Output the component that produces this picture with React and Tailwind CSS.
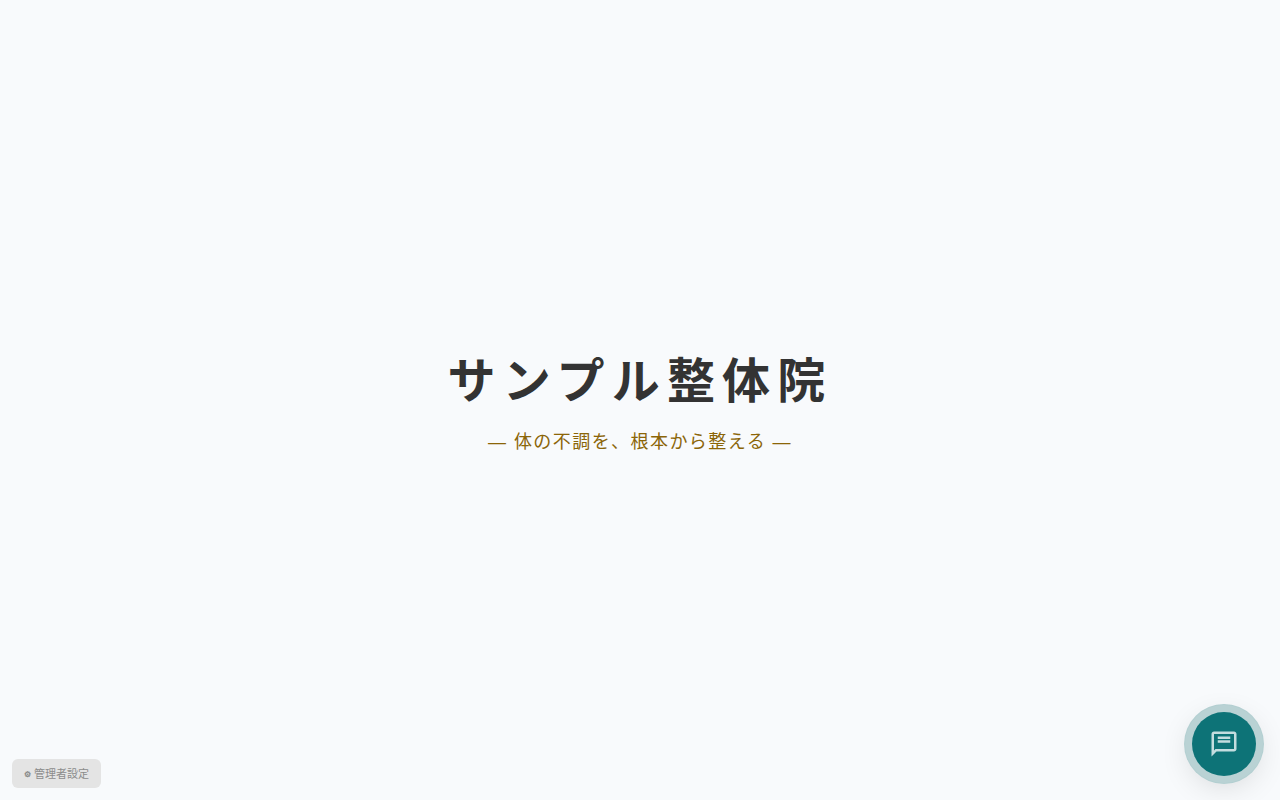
function ChatIcon() {
  return (
    <svg viewBox="0 0 24 24" className="size-[30px] fill-[#c3dddf]" aria-hidden="true">
      <path d="M20 2H4c-1.1 0-2 .9-2 2v18l4-4h14c1.1 0 2-.9 2-2V4c0-1.1-.9-2-2-2zm0 14H5.17L4 17.17V4h16v12z" />
      <path d="M7 6h10v2H7zM7 9h10v2H7z" />
    </svg>
  );
}

export default function App() {
  return (
    <div className="flex min-h-screen flex-col items-center justify-center bg-[#f8fafc] font-['Liberation_Sans','Noto_Sans_CJK_JP',sans-serif] antialiased">
      <main className="flex flex-col items-center text-center">
        <h1 className="text-5xl leading-[72px] font-bold tracking-[0.15em] text-[#333]">サンプル整体院</h1>
        <p className="mt-3 text-lg leading-6 tracking-[0.08em] text-[#8b6508]">― 体の不調を、根本から整える ―</p>
      </main>
      <button type="button" className="fixed bottom-3 left-3 flex items-end gap-[3px] rounded-md bg-[#e4e4e4] px-3 pt-2 pb-[7px] text-[11px] leading-[14px] text-[#8c8c8c]">
        <span className="text-[8px] leading-3 font-bold text-[#888]">⚙</span>
        <span>管理者設定</span>
      </button>
      <button type="button" aria-label="チャットを開く" className="fixed right-6 bottom-6 flex size-16 items-center justify-center rounded-full bg-[#0d7377] shadow-[0_0_0_7px_#b9d2d4,0_0_0_8px_#b3cfd1,0_8px_32px_rgba(0,0,0,0.16)]">
        <ChatIcon />
      </button>
    </div>
  );
}
